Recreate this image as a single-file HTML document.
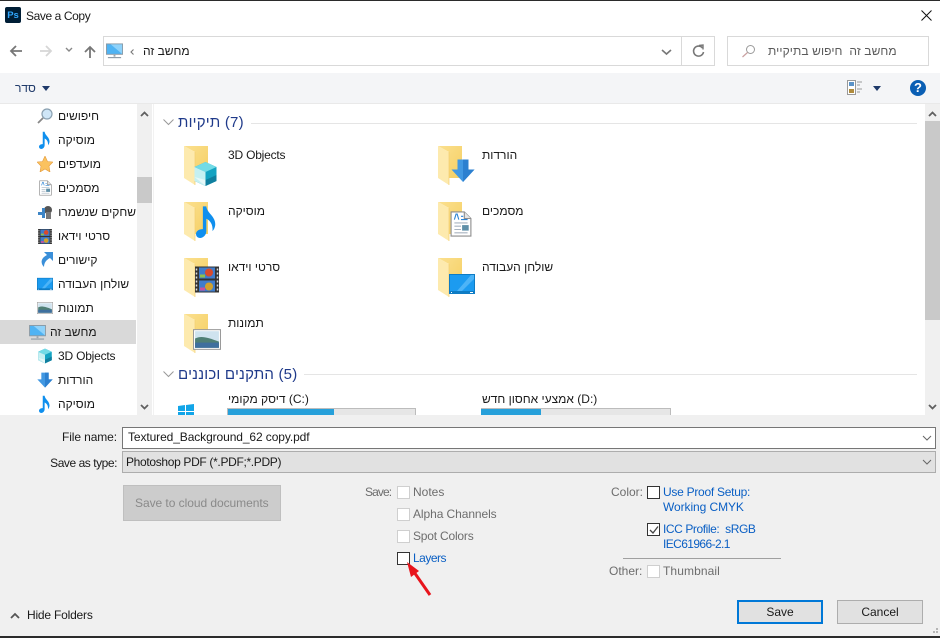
<!DOCTYPE html>
<html><head><meta charset="utf-8"><title>Save a Copy</title>
<style>
html,body{margin:0;padding:0;background:#fff}
#w{position:relative;width:940px;height:638px;overflow:hidden;background:#fff;font:12px/16px "Liberation Sans","DejaVu Sans",sans-serif;color:#1a1a1a}
#w div,#w svg{position:absolute}
.t{white-space:nowrap}
.h{color:#1f3a8a;font-size:15px;line-height:20px}
.g{color:#6d6d6d}
.b{color:#0a5fc4}
.cb{width:11px;height:11px;border:1px solid #cfcfcf;background:#fff}
.cd{border-color:#333}
bdi{direction:ltr;unicode-bidi:isolate}
</style></head><body><div id="w">
<svg width="0" height="0" style="position:absolute">
<defs>
<linearGradient id="fb" x1="0" y1="0" x2="1" y2="1"><stop offset="0" stop-color="#fbe08f"/><stop offset="1" stop-color="#f5cf62"/></linearGradient>
<symbol id="folder" viewBox="0 0 26 40"><path d="M1 1H25V33H12V7Z" fill="url(#fb)"/><path d="M1 1L12 7V40L1 33Z" fill="#fdeaae"/><path d="M12 7V40" stroke="#f2cf70" stroke-width=".7"/></symbol>
<symbol id="cube" viewBox="0 0 24 26"><path d="M12 1L23 6V20L12 25L1 20V6Z" fill="#14a3c2"/><path d="M12 1L23 6L12 11L1 6Z" fill="#72dbe6"/><path d="M1 6L12 11V25L1 20Z" fill="#c5f0f2"/><path d="M12 19L23 14V20L12 25Z" fill="#0f7f9f"/><path d="M1 16L12 25V19Z" fill="#e6f8f8"/></symbol>
<symbol id="note" viewBox="0 0 16 24"><path d="M5 1H7.500C8 6 14 8 14 14C14 16 13 18 12 19C12.500 14 10 11 7.500 10V19C7.500 22 5 24 3 24C1 24 0 22.500 0 21C0 19 2 17.500 5 17.500Z" fill="#0f8fee"/></symbol>
<symbol id="down" viewBox="0 0 24 24"><path d="M6.500 1H17.500V11H23.500L12 23.500L.5 11H6.500Z" fill="#4198e2"/><path d="M12 1H17.500V11H23.500L12 23.500Z" fill="#2c80d0"/></symbol>
<symbol id="doc" viewBox="0 0 20 24"><path d="M1 1H13L19 7V23H1Z" fill="#fff" stroke="#8d8d8d"/><path d="M13 1V7H19" fill="#e4e4e4" stroke="#8d8d8d"/><path d="M4 11H16M4 14H10M4 17H10M4 20H16" stroke="#a8b4c0"/><path d="M4 8L5.500 3H6.500L8 8M10 5H12M10 8H16" stroke="#2b84d6" fill="none"/><rect x="11" y="13" width="6" height="5" fill="#5f8fa8"/></symbol>
<symbol id="film" viewBox="0 0 24 26"><rect width="24" height="26" fill="#333"/><rect x="4" y="1" width="16" height="11" fill="#3f7ccc"/><rect x="4" y="14" width="16" height="11" fill="#3f7ccc"/><circle cx="14" cy="6" r="4" fill="#d9492c"/><circle cx="14" cy="20" r="4" fill="#d2a12c"/><rect x="5" y="8" width="5" height="3" fill="#8fbf4d"/><rect x="5" y="21" width="5" height="3" fill="#c94f9c"/><path d="M1.500 2v22M22.500 2v22" stroke="#ddd" stroke-width="1.500" stroke-dasharray="2 2"/></symbol>
<symbol id="desk" viewBox="0 0 26 20"><rect width="26" height="20" fill="#0f7cc4"/><path d="M1 1H25V17H1Z" fill="#1c9bf0"/><path d="M8 17L22 1H25V5L13 17Z" fill="#4db4f7"/><path d="M2 18.500H3M21 18.500H24" stroke="#fff"/></symbol>
<symbol id="pic" viewBox="0 0 27 20"><rect x=".5" y=".5" width="26" height="19" fill="#fff" stroke="#9a9a9a"/><rect x="2" y="2" width="23" height="16" fill="#cfe3ef"/><path d="M2 9C8 6 14 8 25 12V18H2Z" fill="#4f7f75"/><rect x="2" y="13" width="23" height="5" fill="#3f6f9e"/></symbol>
<symbol id="pc" viewBox="0 0 18 16"><rect x=".5" y=".5" width="17" height="11" fill="#4fb3f3" stroke="#8c9aa5"/><path d="M5 1H17V11Z" fill="#8ed2fa"/><path d="M8 12h2v2H8z" fill="#9aa6ae"/><path d="M2 15H16" stroke="#8c9aa5" stroke-width="1.200"/></symbol>
</defs></svg>

<div style="left:0;top:0;width:940px;height:1px;background:#2b2b2b"></div>
<div style="left:5px;top:7px;width:16px;height:16px;background:#001e36;border-radius:2px;color:#31a8ff;font:bold 9.5px/17px 'Liberation Sans';text-align:center">Ps</div>
<div class="t" style="left:26px;top:8px;letter-spacing:-.4px">Save a Copy</div>
<svg style="left:921px;top:10px" width="11" height="11"><path d="M.5.500L10.500 10.500M10.500.500L.5 10.500" stroke="#111" stroke-width="1"/></svg>

<svg style="left:9px;top:44px" width="14" height="14"><path d="M13 7H2M7 2L2 7L7 12" stroke="#777" stroke-width="1.800" fill="none"/></svg>
<svg style="left:39px;top:44px" width="14" height="14"><path d="M1 7H12M7 2L12 7L7 12" stroke="#d6d6d6" stroke-width="1.800" fill="none"/></svg>
<svg style="left:65px;top:47px" width="8" height="6"><path d="M1 1L4 4L7 1" stroke="#888" stroke-width="1.400" fill="none"/></svg>
<svg style="left:83px;top:45px" width="14" height="14"><path d="M7 13V2M2 7L7 2L12 7" stroke="#777" stroke-width="1.800" fill="none"/></svg>
<div style="left:103px;top:36px;width:610px;height:28px;border:1px solid #d9d9d9"></div>
<svg style="left:106px;top:43px" width="17" height="16"><use href="#pc"/></svg>
<svg style="left:129px;top:48px" width="6" height="8"><path d="M4.500 1.500L2 4L4.500 6.500" stroke="#777" stroke-width="1.100" fill="none"/></svg>
<div class="t" dir="rtl" style="left:143px;top:43px">מחשב זה</div>
<svg style="left:661px;top:49px" width="11" height="7"><path d="M1 1L5.500 5L10 1" stroke="#777" stroke-width="1.600" fill="none"/></svg>
<div style="left:681px;top:37px;width:1px;height:28px;background:#d9d9d9"></div>
<svg style="left:692px;top:44px" width="13" height="14"><path d="M10.500 4A5 5 0 1 0 11.500 8" stroke="#777" stroke-width="1.600" fill="none"/><path d="M7 1.500L11 1V5.500" stroke="#777" stroke-width="1.400" fill="none"/></svg>
<div style="left:727px;top:36px;width:200px;height:28px;border:1px solid #d9d9d9"></div>
<svg style="left:741px;top:44px" width="15" height="14"><circle cx="9.500" cy="5.500" r="4" fill="none" stroke="#9a9a9a"/><path d="M6.500 8.500L1.500 13" stroke="#c9a0a0" stroke-width="1.200"/></svg>
<div class="t" dir="rtl" style="left:768px;top:43px;color:#5a5a5a;letter-spacing:.1px">מחשב זה&nbsp; חיפוש בתיקיית</div>

<div style="left:0;top:73px;width:940px;height:30px;background:#f4f5f7"></div>
<div style="left:0;top:103px;width:940px;height:1px;background:#e9e9e9"></div>
<div class="t" dir="rtl" style="left:15px;top:80px;color:#1f3a6a">סדר</div>
<svg style="left:42px;top:86px" width="8" height="5"><path d="M0 0H8L4 5Z" fill="#1f3a6a"/></svg>
<svg style="left:847px;top:80px" width="16" height="15"><rect x=".5" y=".5" width="8" height="14" fill="#fff" stroke="#999"/><rect x="2" y="2" width="5" height="4" fill="#5b93c8"/><rect x="2" y="9" width="5" height="4" fill="#b08b3c"/><path d="M10 2H15M10 5H13M10 9H15M10 12H13" stroke="#999"/></svg>
<svg style="left:873px;top:86px" width="8" height="5"><path d="M0 0H8L4 5Z" fill="#1f3a6a"/></svg>
<div style="left:910px;top:80px;width:16px;height:16px;border-radius:8px;background:#0a5fb4;color:#fff;font:bold 13px/16px 'Liberation Sans';text-align:center">?</div>

<!-- left nav -->
<div style="left:0;top:320px;width:136px;height:24px;background:#d9d9d9"></div>
<div style="left:137px;top:104px;width:15px;height:311px;background:#f0f0f0"></div>
<div style="left:137px;top:177px;width:15px;height:26px;background:#c9c9c9"></div>
<svg style="left:140px;top:111px" width="9" height="6"><path d="M1 5L4.500 1.500L8 5" stroke="#606060" stroke-width="1.800" fill="none"/></svg>
<svg style="left:140px;top:404px" width="9" height="6"><path d="M1 1L4.500 4.500L8 1" stroke="#606060" stroke-width="1.800" fill="none"/></svg>
<div style="left:153px;top:104px;width:1px;height:311px;background:#f2f2f2"></div>

<svg style="left:37px;top:108px" width="16" height="16"><circle cx="10" cy="6" r="5" fill="#cfe6f7" stroke="#8aa0b0" stroke-width="1.200"/><path d="M6 10L1 15" stroke="#888" stroke-width="1.800"/></svg>
<div class="t" dir="rtl" style="left:58px;top:108px">חיפושים</div>
<svg style="left:39px;top:131px" width="12" height="18"><use href="#note"/></svg>
<div class="t" dir="rtl" style="left:58px;top:132px">מוסיקה</div>
<svg style="left:37px;top:156px" width="16" height="16"><path d="M8 0L10.500 5.500L16 6L12 10L13 16L8 13L3 16L4 10L0 6L5.500 5.500Z" fill="#fbc25f" stroke="#e39a3c" stroke-width=".6"/></svg>
<div class="t" dir="rtl" style="left:58px;top:156px">מועדפים</div>
<svg style="left:39px;top:180px" width="13" height="16"><use href="#doc"/></svg>
<div class="t" dir="rtl" style="left:58px;top:180px">מסמכים</div>
<svg style="left:37px;top:205px" width="16" height="14"><circle cx="11" cy="5" r="4" fill="#555"/><rect x="9" y="7" width="5" height="7" fill="#777"/><path d="M1 7H5V3H8V13H5V10H1Z" fill="#3d85c6"/></svg>
<div class="t" dir="rtl" style="left:58px;top:204px;width:78px;overflow:hidden">שחקים שנשמרו</div>
<svg style="left:38px;top:229px" width="14" height="15"><use href="#film"/></svg>
<div class="t" dir="rtl" style="left:58px;top:228px">סרטי וידאו</div>
<svg style="left:39px;top:252px" width="14" height="15"><path d="M5 0H14V9L11 6C7 8 5 11 5 15C1 11 2 6 8 3Z" fill="#3a8fd9"/></svg>
<div class="t" dir="rtl" style="left:58px;top:252px">קישורים</div>
<svg style="left:37px;top:277px" width="16" height="14"><use href="#desk"/></svg>
<div class="t" dir="rtl" style="left:58px;top:276px">שולחן העבודה</div>
<svg style="left:37px;top:302px" width="16" height="12"><use href="#pic"/></svg>
<div class="t" dir="rtl" style="left:58px;top:300px">תמונות</div>
<svg style="left:29px;top:325px" width="17" height="15"><use href="#pc"/></svg>
<div class="t" dir="rtl" style="left:50px;top:324px">מחשב זה</div>
<svg style="left:37px;top:348px" width="16" height="16"><use href="#cube"/></svg>
<div class="t" style="left:58px;top:348px;letter-spacing:-.2px">3D Objects</div>
<svg style="left:37px;top:372px" width="16" height="16"><use href="#down"/></svg>
<div class="t" dir="rtl" style="left:58px;top:372px">הורדות</div>
<svg style="left:39px;top:395px" width="12" height="18"><use href="#note"/></svg>
<div class="t" dir="rtl" style="left:58px;top:396px">מוסיקה</div>

<!-- main -->
<div style="left:925px;top:104px;width:15px;height:311px;background:#f0f0f0"></div>
<div style="left:925px;top:121px;width:15px;height:199px;background:#c9c9c9"></div>
<svg style="left:928px;top:111px" width="9" height="6"><path d="M1 5L4.500 1.500L8 5" stroke="#606060" stroke-width="1.800" fill="none"/></svg>
<svg style="left:928px;top:404px" width="9" height="6"><path d="M1 1L4.500 4.500L8 1" stroke="#606060" stroke-width="1.800" fill="none"/></svg>

<svg style="left:163px;top:119px" width="11" height="7"><path d="M.5.500L5.500 5.500L10.500.500" stroke="#999" fill="none"/></svg>
<div class="t h" dir="rtl" style="left:178px;top:113px;letter-spacing:.2px">(7) תיקיות</div>
<div style="left:251px;top:123px;width:666px;height:1px;background:#e5e5e5"></div>

<svg style="left:183px;top:145px" width="26" height="40"><use href="#folder"/></svg>
<svg style="left:193px;top:161px" width="25" height="26"><use href="#cube"/></svg>
<div class="t" style="left:228px;top:147px;letter-spacing:-.2px">3D Objects</div>
<svg style="left:437px;top:145px" width="26" height="40"><use href="#folder"/></svg>
<svg style="left:451px;top:158px" width="24" height="25"><use href="#down"/></svg>
<div class="t" dir="rtl" style="left:482px;top:147px">הורדות</div>

<svg style="left:183px;top:201px" width="26" height="40"><use href="#folder"/></svg>
<svg style="left:196px;top:205px" width="22" height="33"><use href="#note"/></svg>
<div class="t" dir="rtl" style="left:228px;top:203px">מוסיקה</div>
<svg style="left:437px;top:201px" width="26" height="40"><use href="#folder"/></svg>
<svg style="left:450px;top:210px" width="22" height="28"><use href="#doc"/></svg>
<div class="t" dir="rtl" style="left:482px;top:203px">מסמכים</div>

<svg style="left:183px;top:257px" width="26" height="40"><use href="#folder"/></svg>
<svg style="left:195px;top:266px" width="24" height="27"><use href="#film"/></svg>
<div class="t" dir="rtl" style="left:228px;top:259px">סרטי וידאו</div>
<svg style="left:437px;top:257px" width="26" height="40"><use href="#folder"/></svg>
<svg style="left:448px;top:274px" width="28" height="20"><use href="#desk"/></svg>
<div class="t" dir="rtl" style="left:482px;top:259px">שולחן העבודה</div>

<svg style="left:183px;top:313px" width="26" height="40"><use href="#folder"/></svg>
<svg style="left:193px;top:329px" width="28" height="21"><use href="#pic"/></svg>
<div class="t" dir="rtl" style="left:228px;top:315px">תמונות</div>

<svg style="left:163px;top:371px" width="11" height="7"><path d="M.5.500L5.500 5.500L10.500.500" stroke="#999" fill="none"/></svg>
<div class="t h" dir="rtl" style="left:178px;top:365px;letter-spacing:.2px">(5) התקנים וכוננים</div>
<div style="left:304px;top:374px;width:613px;height:1px;background:#e5e5e5"></div>

<svg style="left:178px;top:404px" width="16" height="11"><path d="M0 2L7 1V7H0ZM8 1L16 0V7H8ZM0 8H7V11H0ZM8 8H16V11H8Z" fill="#12a5e8"/></svg>
<div class="t" dir="rtl" style="left:228px;top:391px"><bdi>(C:)</bdi> דיסק מקומי</div>
<div style="left:227px;top:408px;width:187px;height:7px;background:#e6e6e6;border:1px solid #bcbcbc;border-bottom:0"></div>
<div style="left:228px;top:409px;width:106px;height:6px;background:#26a0da"></div>
<div class="t" dir="rtl" style="left:482px;top:391px"><bdi>(D:)</bdi> אמצעי אחסון חדש</div>
<div style="left:481px;top:408px;width:188px;height:7px;background:#e6e6e6;border:1px solid #bcbcbc;border-bottom:0"></div>
<div style="left:481px;top:409px;width:60px;height:6px;background:#26a0da"></div>

<!-- bottom -->
<div style="left:0;top:415px;width:940px;height:221px;background:#f0f0f0"></div>
<div style="left:0;top:636px;width:940px;height:2px;background:#2b2b2b"></div>
<div class="t" style="right:823px;top:429px;letter-spacing:-.1px">File name:</div>
<div style="left:122px;top:427px;width:812px;height:20px;background:#fff;border:1px solid #767676"></div>
<div class="t" style="left:128px;top:429px;letter-spacing:-.1px">Textured_Background_62 copy.pdf</div>
<svg style="left:922px;top:435px" width="10" height="6"><path d="M1 1L5 5L9 1" stroke="#666" fill="none"/></svg>
<div class="t" style="right:823px;top:455px;letter-spacing:-.45px">Save as type:</div>
<div style="left:122px;top:451px;width:812px;height:20px;background:#e1e1e1;border:1px solid #adadad"></div>
<div class="t" style="left:126px;top:454px;letter-spacing:-.33px">Photoshop PDF (*.PDF;*.PDP)</div>
<svg style="left:922px;top:459px" width="10" height="6"><path d="M1 1L5 5L9 1" stroke="#666" fill="none"/></svg>
<div style="left:123px;top:485px;width:156px;height:34px;background:#ccc;border:1px solid #bfbfbf"></div>
<div class="t" style="left:135px;top:495px;color:#8a8a8a;letter-spacing:-.05px">Save to cloud documents</div>

<div class="t g" style="left:365px;top:484px;letter-spacing:-.9px">Save:</div>
<div class="cb" style="left:397px;top:486px"></div><div class="t g" style="left:413px;top:484px">Notes</div>
<div class="cb" style="left:397px;top:508px"></div><div class="t g" style="left:413px;top:506px;letter-spacing:-.08px">Alpha Channels</div>
<div class="cb" style="left:397px;top:530px"></div><div class="t g" style="left:413px;top:528px;letter-spacing:-.2px">Spot Colors</div>
<div class="cb cd" style="left:397px;top:552px"></div><div class="t b" style="left:413px;top:550px;letter-spacing:-.5px">Layers</div>
<svg style="left:400px;top:558px" width="36" height="42"><path d="M30 37L14 14" stroke="#e8141c" stroke-width="3"/><path d="M7 4L19 13L11 19Z" fill="#e8141c"/></svg>

<div class="t g" style="left:611px;top:484px">Color:</div>
<div class="cb cd" style="left:647px;top:486px"></div>
<div class="t b" style="left:663px;top:484px;letter-spacing:-.27px">Use Proof Setup:</div>
<div class="t b" style="left:663px;top:499px;letter-spacing:-.08px">Working CMYK</div>
<div class="cb cd" style="left:647px;top:523px"></div>
<svg style="left:648px;top:524px" width="12" height="12"><path d="M2 6L5 9L10 2.500" stroke="#444" stroke-width="1.300" fill="none"/></svg>
<div class="t b" style="left:663px;top:521px;letter-spacing:-.42px">ICC Profile:&nbsp; sRGB</div>
<div class="t b" style="left:663px;top:536px;letter-spacing:-.6px">IEC61966-2.1</div>
<div style="left:623px;top:558px;width:158px;height:1px;background:#a0a0a0"></div>
<div class="t g" style="left:609px;top:563px">Other:</div>
<div class="cb" style="left:647px;top:565px"></div>
<div class="t g" style="left:663px;top:563px;letter-spacing:.1px">Thumbnail</div>

<div style="left:737px;top:600px;width:82px;height:20px;background:#e1e1e1;border:2px solid #0078d7;text-align:center;line-height:20px">Save</div>
<div style="left:837px;top:600px;width:84px;height:22px;background:#e1e1e1;border:1px solid #adadad;text-align:center;line-height:22px">Cancel</div>
<svg style="left:931px;top:627px" width="8" height="8"><path d="M5 1h2v2H5zM2 4h2v2H2zM5 4h2v2H5z" fill="#b5b5b5"/></svg>

<svg style="left:10px;top:612px" width="10" height="7"><path d="M1 6L5 2L9 6" stroke="#555" stroke-width="1.800" fill="none"/></svg>
<div class="t" style="left:27px;top:607px;letter-spacing:-.2px">Hide Folders</div>
</div></body></html>
